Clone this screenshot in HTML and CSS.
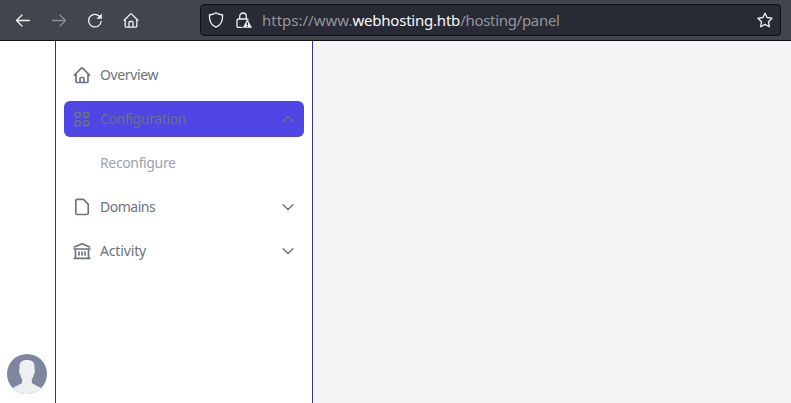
FILE: index.html
```html
<!DOCTYPE html>
<html lang="en">
<head>
<meta charset="utf-8">
<title>Hosting panel</title>
<link rel="stylesheet" href="styles.css">
</head>
<body>
<header class="toolbar">
  <nav class="controls">
    <svg viewBox="0 0 16 16"><path d="M14.500 8.500H1.800M7 3L1.500 8.500L7 14"/></svg>
    <svg class="disabled" viewBox="0 0 16 16"><path d="M1.500 8.500h12.700M9 3L14.500 8.500L9 14"/></svg>
    <svg viewBox="0 0 16 16"><path d="M14.200 9.300A6.300 6.300 0 1 1 12.200 4"/><path class="solid" d="M14.800 1.500v5.300H9.500z"/></svg>
    <svg viewBox="0 0 16 16"><path d="M1.200 8.200L7.300 2.100Q8 1.500 8.700 2.100L14.800 8.200M2.200 7.500V14Q2.200 15.200 3.400 15.200H12.600Q13.800 15.200 13.800 14V7.500M6 15V10.500Q6 9.500 7 9.500H9Q10 9.500 10 10.500V15"/></svg>
  </nav>
  <div class="address">
    <svg viewBox="0 0 16 16"><path d="M8 .8C10 2.300 12.500 2.700 14.600 3C14.800 9 12.500 13.500 8 15.200C3.500 13.500 1.200 9 1.400 3C3.500 2.700 6 2.300 8 .8Z"/></svg>
    <svg class="lock" viewBox="0 0 16 16"><path d="M3.700 7V4.300a3.300 3.300 0 0 1 6.600 0V7M6 15.300H2.500Q1 15.300 1 13.800V8.500Q1 7 2.500 7H10.500Q11.500 7 12 7.700"/><path class="solid" fill-rule="evenodd" d="M10.700 8.200h1.200L16 15.800H6.800ZM10.700 10.500v2.400h1.300v-2.400ZM10.700 13.700v1h1.300v-1Z"/></svg>
    <p class="url">https://www.<b>webhosting.htb</b><span>/hosting/panel</span></p>
    <svg class="star" viewBox="0 0 16 16"><path d="M8 1.200L10.100 5.500L15 6.200L11.500 9.700L12.300 14.700L8 12.400L3.700 14.700L4.500 9.700L1 6.200L5.900 5.500Z"/></svg>
  </div>
</header>
<div class="app">
  <aside class="rail">
    <svg class="avatar" viewBox="0 0 40 40">
      <circle cx="20" cy="20" r="20"/>
      <path d="M12.500 14C12.200 8.500 14 6 20 6s7.800 2.500 7.500 8l.3 3c.3 2-.6 2.800-1.100 4-.5 2-1.400 3.500-1.900 4.500v2.800c.5 2 6 3.500 9.400 5.900A20 20 0 0 1 5.800 34.200c3.400-2.400 8.900-3.900 9.400-5.900v-2.800c-.5-1-1.400-2.500-1.900-4.500-.5-1.200-1.400-2-1.100-4z"/>
    </svg>
  </aside>
  <nav class="menu">
    <a class="item">
      <svg class="icon" viewBox="0 0 24 24"><path d="M2.800 12.300L11 4Q12 3 13 4L21.200 12.300M4.800 10.500V19.800Q4.800 21 6 21H18Q19.200 21 19.200 19.800V10.500M9.700 20.800V16Q9.700 15 10.700 15H13.300Q14.300 15 14.300 16V20.800"/></svg>
      <span>Overview</span>
    </a>
    <a class="item active">
      <svg class="icon" viewBox="0 0 24 24"><rect x="4" y="4" width="5.800" height="5.800" rx="1.600"/><rect x="14.200" y="4" width="5.800" height="5.800" rx="1.600"/><rect x="4" y="14.200" width="5.800" height="5.800" rx="1.600"/><rect x="14.200" y="14.200" width="5.800" height="5.800" rx="1.600"/></svg>
      <span>Configuration</span>
      <svg class="chevron" viewBox="0 0 24 24"><path d="M4.800 15.500l7.200-7.200 7.200 7.200"/></svg>
    </a>
    <a class="item sub"><span>Reconfigure</span></a>
    <a class="item">
      <svg class="icon" viewBox="0 0 24 24"><path d="M6.400 2.800H13.800L19.500 8.800V19.200Q19.500 21 17.700 21H6.400Q4.600 21 4.600 19.200V4.600Q4.600 2.800 6.400 2.800Z"/></svg>
      <span class="tight">Domains</span>
      <svg class="chevron" viewBox="0 0 24 24"><path d="M19.200 8.700l-7.200 7.200-7.200-7.200"/></svg>
    </a>
    <a class="item">
      <svg class="icon" viewBox="0 0 24 24"><path d="M2.800 7.200L12 3.200L21.200 7.200M2.400 9.600H21.600M4.200 9.600V20.800M19.800 9.600V20.800M2.600 20.800H21.400M8.400 13.300V16.700M12 13.300V16.700M15.600 13.300V16.700"/></svg>
      <span class="loose">Activity</span>
      <svg class="chevron" viewBox="0 0 24 24"><path d="M19.200 8.700l-7.200 7.200-7.200-7.200"/></svg>
    </a>
  </nav>
  <main class="content"></main>
</div>
</body>
</html>
```
FILE: styles.css
```css
* { box-sizing: border-box; }
body {
  margin: 0;
  height: 100vh;
  display: flex;
  flex-direction: column;
  overflow: hidden;
  font: 14px/20px "Noto Sans", sans-serif;
  color: #6b7280;
  background: #fff;
}
svg {
  display: block;
  flex: none;
  fill: none;
  stroke: currentColor;
  stroke-width: 1.5;
  stroke-linecap: round;
  stroke-linejoin: round;
}
.toolbar {
  height: 41px;
  flex: none;
  display: flex;
  padding: 4px 10px 4px 15px;
  background: #42454c;
  border-bottom: 1px solid #0f1014;
  color: #f2f2f3;
}
.controls {
  width: 185px;
  display: flex;
  align-items: center;
  gap: 20px;
}
.controls svg, .address svg { width: 16px; height: 16px; stroke-width: 1.300; }
.solid { fill: currentColor; stroke: none; }
.controls .disabled { color: #8b8d91; }
.address {
  flex: 1;
  height: 32px;
  display: flex;
  align-items: center;
  padding: 0 7px;
  background: #282a36;
  border: 1px solid #0f1014;
  border-radius: 4px;
}
.address .lock { margin-left: 12px; }
.url {
  margin: 0 0 0 10px;
  flex: 1;
  font-size: 15px;
  color: #94959b;
  white-space: nowrap;
}
.url b { font-weight: 400; letter-spacing: -.22px; color: #f8f8f8; }
.url span { letter-spacing: -.3px; }
.app { flex: 1; display: flex; min-height: 0; }
.rail {
  width: 56px;
  display: flex;
  align-items: flex-end;
  padding: 0 0 9px 7px;
  border-right: 1px solid #312e81;
}
.avatar { width: 40px; height: 40px; stroke: none; }
.avatar circle { fill: #7d869f; }
.avatar path { fill: #ecf0f1; }
.menu {
  width: 257px;
  display: flex;
  flex-direction: column;
  gap: 8px;
  padding: 16px 8px;
  border-right: 1px solid #3730a3;
}
.item {
  height: 36px;
  display: flex;
  align-items: center;
  gap: 8px;
  padding: 0 8px;
  border-radius: 6px;
}
.item span { flex: 1; letter-spacing: -.36px; }
.item .tight { letter-spacing: -.48px; }
.item .loose { letter-spacing: -.15px; }
.active { background: #4f46e5; }
.sub { padding-left: 36px; color: #9ca3af; }
.icon { width: 20px; height: 20px; stroke-width: 2; }
.chevron { width: 16px; height: 16px; stroke-width: 2.200; }
.content { flex: 1; background: #f3f4f6; }
```
